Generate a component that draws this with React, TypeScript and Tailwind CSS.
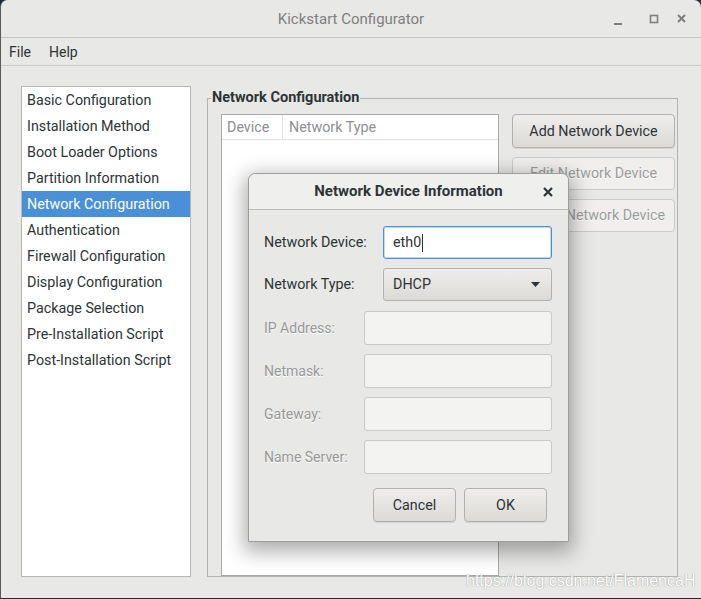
import React from "react";

const items = [
  "Basic Configuration",
  "Installation Method",
  "Boot Loader Options",
  "Partition Information",
  "Network Configuration",
  "Authentication",
  "Firewall Configuration",
  "Display Configuration",
  "Package Selection",
  "Pre-Installation Script",
  "Post-Installation Script",
];

function GtkButton({ label, disabled, className }: { label: string; disabled?: boolean; className?: string }) {
  return (
    <div
      className={
        "flex items-center justify-center pt-[1px] rounded-[4px] border text-[14.3px] " +
        (disabled
          ? "border-[#cdcbc8] bg-[#f0efed] text-[#9a9c9c] [text-shadow:0_1px_0_#ffffff]"
          : "border-[#b2b1ae] bg-gradient-to-b from-[#efeeec] to-[#dcdad7] text-[#2e3436] shadow-[0_1px_0_rgba(0,0,0,0.08)]") +
        " " +
        (className ?? "")
      }
    >
      {label}
    </div>
  );
}

function DisabledRow({ label, className }: { label: string; className?: string }) {
  return (
    <div className={"flex items-center " + (className ?? "")}>
      <div className="w-[100px] text-[14px] text-[#979998] [text-shadow:0_1px_0_#ffffff]">{label}</div>
      <div className="w-[188px] h-[34px] rounded-[3px] border border-[#cbc9c6] bg-[#f3f3f2]" />
    </div>
  );
}

export default function App() {
  return (
    <div className="w-[701px] h-[599px] bg-[#1e2c35] overflow-hidden font-['Roboto',sans-serif] text-[#2e3436]">
      <div className="relative w-[701px] h-[598px] bg-[#e8e8e7] rounded-t-[7px] border-l border-[#5b5b5b] flex flex-col">
        {/* title bar */}
        <div className="h-[38px] border-b border-[#c4c4c1] grid grid-cols-[1fr_auto_1fr] items-center">
          <div />
          <div className="text-[15px] text-[#7f7f7f] pt-[1px]">Kickstart Configurator</div>
          <div className="flex justify-end items-center pr-[9px] text-[#7a7a7a]">
            <svg width="34" height="20" viewBox="0 0 34 20">
              <rect x="12" y="14" width="8" height="2" fill="#7f7f7f" />
            </svg>
            <svg width="36" height="20" viewBox="0 0 36 20">
              <rect x="14.5" y="6.5" width="7" height="7" fill="none" stroke="#7f7f7f" strokeWidth="1.6" />
            </svg>
            <svg width="20" height="20" viewBox="0 0 20 20">
              <path d="M6 6 L13 13 M13 6 L6 13" stroke="#7f7f7f" strokeWidth="2" />
            </svg>
          </div>
        </div>
        {/* menu bar */}
        <div className="h-[28px] border-b border-[#c9c9c6] flex items-center pl-[8px] gap-[18px] text-[14px] text-[#2e3436]">
          <span className="pt-[1px]">File</span>
          <span className="pt-[1px]">Help</span>
        </div>
        {/* content */}
        <div className="flex pl-[20px] pt-[20px]">
          <div className="w-[170px] h-[491px] border border-[#b6b6b3] bg-white">
            {items.map((it, i) => (
              <div
                key={it}
                className={
                  "h-[26px] flex items-center pl-[5px] pt-[2px] text-[14.3px] " +
                  (i === 4 ? "bg-[#4a90d9] text-white" : "text-[#2e3436]")
                }
              >
                {it}
              </div>
            ))}
          </div>
          <div className="ml-[16px] mt-[12px] relative w-[471px] h-[479px] border border-[#b3b3b0]">
            <span className="absolute left-[3px] -top-[11px] bg-[#e8e8e7] px-[1px] text-[14.5px] font-bold text-[#2e3436] leading-[20px]">
              Network Configuration
            </span>
            <div className="flex pl-[13px] pt-[15px]">
              <div className="w-[278px] h-[462px] border border-[#a9a9a7] bg-white flex flex-col">
                <div className="h-[25px] flex border-b border-[#e2e2e0] text-[14.3px] text-[#8d8f90]">
                  <div className="w-[61px] border-r border-[#e2e2e0] flex items-center pl-[5px] pt-[1px]">Device</div>
                  <div className="flex items-center pl-[6px] pt-[1px]">Network Type</div>
                </div>
              </div>
              <div className="ml-[13px] flex flex-col gap-[9px]">
                <GtkButton label="Add Network Device" className="w-[163px] h-[34px]" />
                <GtkButton label="Edit Network Device" disabled className="w-[163px] h-[33px]" />
                <GtkButton label="Delete Network Device" disabled className="w-[163px] h-[33px]" />
              </div>
            </div>
          </div>
        </div>

        {/* watermark */}
        <div className="absolute left-[465px] top-[569px] text-[16px] font-['Liberation_Sans',sans-serif] text-white [text-shadow:0_0_1px_#a0a0a0,0_0_1px_#a0a0a0]">
          https://blog.csdn.net/FlamencaH
        </div>

        {/* dialog */}
        <div className="absolute left-[247px] top-[173px] w-[321px] h-[369px] rounded-t-[7px] border border-[#9d9d9b] bg-[#e8e8e7] shadow-[0_6px_20px_4px_rgba(0,0,0,0.32)] flex flex-col">
          <div className="relative h-[36px] rounded-t-[7px] bg-[#efefee] border-b border-[#bdbdba] flex items-center justify-center">
            <span className="text-[15px] font-bold text-[#2e3436]">Network Device Information</span>
            <svg className="absolute right-[14px] top-[12px]" width="12" height="12" viewBox="0 0 12 12">
              <path d="M2 2 L10 10 M10 2 L2 10" stroke="#2e3436" strokeWidth="2.2" />
            </svg>
          </div>
          <div className="flex flex-col pl-[15px] pt-[16px]">
            <div className="flex items-center">
              <div className="w-[119px] text-[14.3px] text-[#2e3436]">Network Device:</div>
              <div className="w-[169px] h-[33px] rounded-[3px] border border-[#4a90d9] bg-white flex items-center pl-[9px] text-[14.3px] text-[#2e3436] shadow-[inset_0_0_0_1px_rgba(74,144,217,0.35)]">
                eth0
                <span className="ml-[1px] w-[1px] h-[18px] bg-[#2e3436]" />
              </div>
            </div>
            <div className="flex items-center mt-[9px]">
              <div className="w-[119px] text-[14.3px] text-[#2e3436]">Network Type:</div>
              <div className="w-[169px] h-[33px] rounded-[3px] border border-[#b2b1ae] bg-gradient-to-b from-[#efeeec] to-[#dcdad7] flex items-center justify-between pl-[9px] pr-[11px] text-[14.3px] text-[#2e3436]">
                <span>DHCP</span>
                <svg width="9" height="5" viewBox="0 0 9 5">
                  <path d="M0 0 L9 0 L4.5 5 Z" fill="#2e3436" />
                </svg>
              </div>
            </div>
            <DisabledRow label="IP Address:" className="mt-[10px]" />
            <DisabledRow label="Netmask:" className="mt-[9px]" />
            <DisabledRow label="Gateway:" className="mt-[9px]" />
            <DisabledRow label="Name Server:" className="mt-[9px]" />
            <div className="flex justify-end gap-[8px] pr-[21px] mt-[14px]">
              <GtkButton label="Cancel" className="w-[83px] h-[34px]" />
              <GtkButton label="OK" className="w-[83px] h-[34px]" />
            </div>
          </div>
        </div>
      </div>
    </div>
  );
}
